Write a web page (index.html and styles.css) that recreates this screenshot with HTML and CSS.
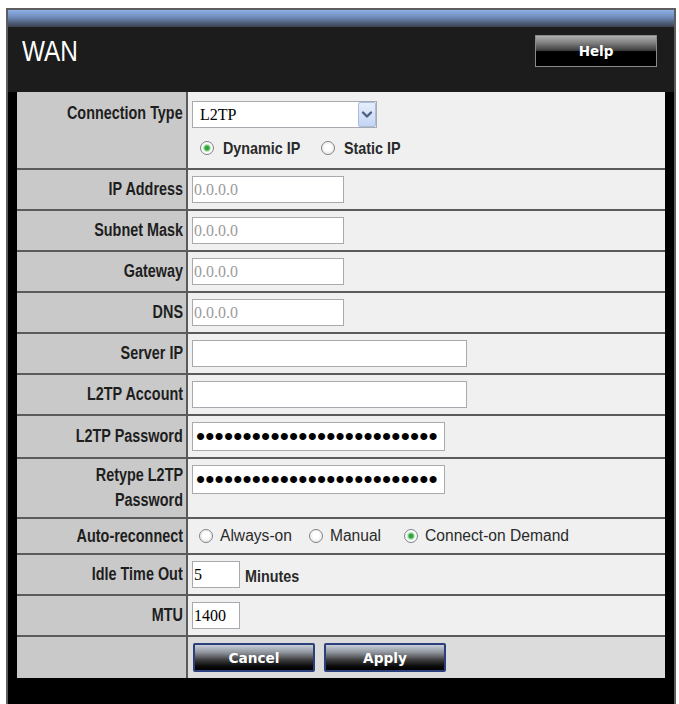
FILE: index.html
```html
<!DOCTYPE html>
<html>
<head>
<meta charset="utf-8">
<title>WAN</title>
<link rel="stylesheet" href="styles.css">
</head>
<body>
<div class="panel">
  <div class="topbar"></div>
  <div class="header">
    <h1 class="title"><span class="narrow">WAN</span></h1>
    <button class="help-btn" type="button">Help</button>
  </div>
  <div class="body">
    <table class="form">
      <colgroup><col class="c-lbl"><col class="c-val"></colgroup>
      <tr>
        <td class="lbl lbl-top"><span class="nl">Connection Type</span></td>
        <td class="val">
          <div class="select-wrap">
            <select class="sel"><option>L2TP</option></select>
            <span class="sel-arrow"><svg width="18" height="25" viewBox="0 0 18 25"><path d="M5 10.5 L9 14.5 L13 10.5" fill="none" stroke="#4a5f86" stroke-width="2.4" stroke-linecap="round" stroke-linejoin="round"/></svg></span>
          </div>
          <div class="radios radios-ip">
            <label class="opt bold"><input class="radio" type="radio" name="iptype" checked><span class="nb">Dynamic IP</span></label>
            <label class="opt bold"><input class="radio" type="radio" name="iptype"><span class="nb">Static IP</span></label>
          </div>
        </td>
      </tr>
      <tr><td class="lbl"><span class="nl">IP Address</span></td><td class="val"><input class="txt w-ip dim" type="text" value="0.0.0.0"></td></tr>
      <tr><td class="lbl"><span class="nl">Subnet Mask</span></td><td class="val"><input class="txt w-ip dim" type="text" value="0.0.0.0"></td></tr>
      <tr><td class="lbl"><span class="nl">Gateway</span></td><td class="val"><input class="txt w-ip dim" type="text" value="0.0.0.0"></td></tr>
      <tr><td class="lbl"><span class="nl">DNS</span></td><td class="val"><input class="txt w-ip dim" type="text" value="0.0.0.0"></td></tr>
      <tr><td class="lbl"><span class="nl">Server IP</span></td><td class="val"><input class="txt w-long" type="text" value=""></td></tr>
      <tr><td class="lbl"><span class="nl">L2TP Account</span></td><td class="val"><input class="txt w-long" type="text" value=""></td></tr>
      <tr><td class="lbl"><span class="nl">L2TP Password</span></td><td class="val"><input class="txt pw" type="password" value="abcdefghijklmnopqrstuvwxyz"></td></tr>
      <tr><td class="lbl"><span class="nl">Retype L2TP<br>Password</span></td><td class="val val-top"><input class="txt pw" type="password" value="abcdefghijklmnopqrstuvwxyz"></td></tr>
      <tr>
        <td class="lbl"><span class="nl">Auto-reconnect</span></td>
        <td class="val">
          <div class="radios radios-auto">
            <label class="opt"><input class="radio" type="radio" name="auto"><span>Always-on</span></label>
            <label class="opt"><input class="radio" type="radio" name="auto"><span>Manual</span></label>
            <label class="opt"><input class="radio" type="radio" name="auto" checked><span>Connect-on Demand</span></label>
          </div>
        </td>
      </tr>
      <tr><td class="lbl"><span class="nl">Idle Time Out</span></td><td class="val"><div class="inline"><input class="txt w-short" type="text" value="5"><span class="unit nb">Minutes</span></div></td></tr>
      <tr><td class="lbl"><span class="nl">MTU</span></td><td class="val"><input class="txt w-short" type="text" value="1400"></td></tr>
      <tr class="btn-row">
        <td class="lbl"></td>
        <td class="val"><div class="buttons"><button class="btn" type="button">Cancel</button><button class="btn" type="button">Apply</button></div></td>
      </tr>
    </table>
  </div>
</div>
</body>
</html>
```
FILE: styles.css
```css
html, body {
  margin: 0;
  padding: 0;
  background: #ffffff;
  font-family: "Liberation Sans", Arial, sans-serif;
}

.panel {
  margin: 8px 0 0 6px;
  width: 666px;
  border: 2px solid #5e5e5e;
  border-bottom: none;
  background: #000000;
}

.topbar {
  height: 17px;
  background: linear-gradient(#90b2e8, #6d89b8 45%, #4b5870 80%, #3c4350);
}

.header {
  box-sizing: border-box;
  height: 65px;
  background: #1c1c1c;
  display: flex;
  justify-content: space-between;
  align-items: flex-start;
  padding: 8px 17px 0 14px;
}

.title {
  margin: 0;
  color: #ffffff;
  font-family: "Liberation Sans", Arial, sans-serif;
  font-weight: 400;
  font-size: 29px;
  line-height: 32px;
}

.narrow {
  display: inline-block;
  transform: scaleX(0.84);
  transform-origin: left center;
}

.help-btn {
  box-sizing: border-box;
  width: 122px;
  height: 32px;
  margin: 0;
  padding: 0;
  border: 1px solid #8a8a8a;
  background: linear-gradient(#b0b0b0, #7a7a7a 25%, #3e3e3e 48%, #000000 52%, #000000);
  color: #ffffff;
  font-family: "DejaVu Sans", Verdana, sans-serif;
  font-weight: 700;
  font-size: 13.5px;
}

.body {
  padding: 0 9px 40px;
}

.form {
  width: 648px;
  border-collapse: collapse;
  border-style: hidden;
  table-layout: fixed;
}

.c-lbl { width: 170px; }
.c-val { width: 478px; }

.form td {
  border: 2px solid #5b5b5b;
}

.lbl {
  background: #c9c9c9;
  text-align: right;
  padding: 4px 3px 4px 4px;
  vertical-align: middle;
  color: #1e1e1e;
  font-family: "Liberation Sans", Arial, sans-serif;
  font-weight: 700;
  font-size: 18px;
  line-height: 25px;
}

.nl {
  display: inline-block;
  transform: scaleX(0.8);
  transform-origin: right center;
}

.lbl-top {
  vertical-align: top;
  padding-top: 9px;
}

.val {
  background: #f0f0f0;
  padding: 6px 4px;
  vertical-align: middle;
}

.val-top {
  vertical-align: top;
}

.btn-row .val {
  background: #dcdcdc;
}

.select-wrap {
  position: relative;
  width: 185px;
  height: 27px;
  margin-top: 3px;
}

.sel {
  appearance: none;
  -webkit-appearance: none;
  box-sizing: border-box;
  width: 185px;
  height: 27px;
  margin: 0;
  border: 1px solid #a7abb0;
  border-radius: 0;
  background: #ffffff;
  padding: 0 0 0 7px;
  color: #000000;
  font-family: "Liberation Serif", "Times New Roman", serif;
  font-size: 16px;
}

.sel-arrow {
  position: absolute;
  top: 1px;
  right: 1px;
  width: 18px;
  height: 25px;
  box-sizing: border-box;
  border: 1px solid #a9bde0;
  border-radius: 2px;
  background: linear-gradient(#e6eefb, #c5d6f3);
  pointer-events: none;
}

.sel-arrow svg {
  display: block;
  margin: -1px 0 0 -1px;
}

.radios {
  display: flex;
  align-items: center;
}

.radios-ip {
  height: 28px;
  margin-top: 6px;
}

.radios-auto {
  height: 22px;
}

.opt {
  display: flex;
  align-items: center;
  color: #2a2a2a;
  font-family: "Liberation Sans", Arial, sans-serif;
  font-size: 15.6px;
}

.opt.bold {
  font-weight: 700;
  font-size: 16.5px;
}

.nb {
  display: inline-block;
  transform: scaleX(0.87);
  transform-origin: left center;
}

.radios-ip .opt span { margin-left: 9px; }
.radios-ip .opt .radio { margin-left: 8px; }
.radios-ip .opt + .opt .radio { margin-left: 9px; }

.radios-auto .opt span { margin-left: 7px; }
.radios-auto .opt .radio { margin-left: 7px; }
.radios-auto .opt + .opt .radio { margin-left: 17px; }
.radios-auto .opt:last-child .radio { margin-left: 23px; }

.radio {
  appearance: none;
  -webkit-appearance: none;
  box-sizing: border-box;
  width: 14px;
  height: 14px;
  margin: 0;
  border: 1px solid #7f8389;
  border-radius: 50%;
  background: radial-gradient(circle at 50% 45%, #ffffff 30%, #dedede 100%);
  flex: none;
}

.radio:checked {
  background: radial-gradient(circle at 50% 50%, #2f9e38 0, #35a83e 2px, #aee0a8 3.2px, #ffffff 4.6px, #e2e2e2 100%);
}

.txt {
  display: block;
  box-sizing: border-box;
  height: 27px;
  margin: 0;
  border: 1px solid #a7abb0;
  border-radius: 0;
  background: #ffffff;
  padding: 0 1px;
  color: #000000;
  font-family: "Liberation Serif", "Times New Roman", serif;
  font-size: 16px;
}

.dim { color: #9c9c9c; }

.w-ip { width: 152px; }
.w-long { width: 275px; }
.w-short { width: 48px; }

.pw {
  width: 253px;
  height: 29px;
  padding: 0 3px;
  font-family: "Liberation Sans", Arial, sans-serif;
  font-size: 26px;
  letter-spacing: 0.2px;
}

.inline {
  display: flex;
  align-items: center;
}

.unit {
  margin-left: 5px;
  padding-top: 4px;
  color: #2a2a2a;
  font-weight: 700;
  font-size: 16.5px;
}

.buttons {
  display: flex;
  gap: 9px;
  padding-left: 1px;
}

.btn {
  box-sizing: border-box;
  width: 122px;
  height: 29px;
  margin: 0;
  padding: 0;
  border: 2px solid #2b3f7c;
  border-radius: 2px;
  background: linear-gradient(#c9d0da, #8f949c 30%, #3c3c3c 60%, #0a0a0a 85%, #000000);
  color: #ffffff;
  font-family: "DejaVu Sans", Verdana, sans-serif;
  font-weight: 700;
  font-size: 13.7px;
}
```
